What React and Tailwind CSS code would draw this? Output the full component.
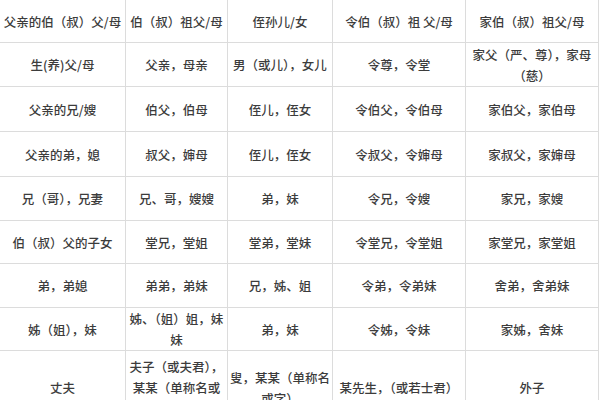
import React from 'react';

const rows = [
  ['父亲的伯（叔）父/母', '伯（叔）祖父/母', '侄孙儿/女', '令伯（叔）祖 父/母', '家伯（叔）祖父/母'],
  ['生(养)父/母', '父亲，母亲', '男（或儿），女儿', '令尊，令堂', '家父（严、尊），家母（慈）'],
  ['父亲的兄/嫂', '伯父，伯母', '侄儿，侄女', '令伯父，令伯母', '家伯父，家伯母'],
  ['父亲的弟，媳', '叔父，婶母', '侄儿，侄女', '令叔父，令婶母', '家叔父，家婶母'],
  ['兄（哥），兄妻', '兄、哥，嫂嫂', '弟，妹', '令兄，令嫂', '家兄，家嫂'],
  ['伯（叔）父的子女', '堂兄，堂姐', '堂弟，堂妹', '令堂兄，令堂姐', '家堂兄，家堂姐'],
  ['弟，弟媳', '弟弟，弟妹', '兄，姊、姐', '令弟，令弟妹', '舍弟，舍弟妹'],
  ['姊（姐），妹', '姊、（姐）姐，妹妹', '弟，妹', '令姊，令妹', '家姊，舍妹'],
  ['丈夫', '夫子（或夫君），某某（单称名或字）', '叟，某某（单称名或字）', '某先生，（或若士君）', '外子'],
];

const heights = ['h-[43px]', 'h-[44px]', 'h-[45px]', 'h-[45px]', 'h-[44px]', 'h-[43px]', 'h-[44px]', 'h-[42px]', 'h-[74px]'];

export default function App() {
  return (
    <div className="w-[600px] h-[400px] overflow-hidden bg-white">
      <table
        className="table-fixed border-collapse text-center text-[12.5px] leading-[21px] font-medium text-[#3c3c3c] -ml-px -mt-px"
        style={{ fontFamily: '"Noto Sans CJK SC", "Noto Sans", sans-serif' }}
      >
        <colgroup>
          <col className="w-[126px]" />
          <col className="w-[102px]" />
          <col className="w-[105px]" />
          <col className="w-[133px]" />
          <col className="w-[133px]" />
        </colgroup>
        <tbody>
          {rows.map((r, i) => (
            <tr key={i} className={heights[i]}>
              {r.map((c, j) => (
                <td key={j} className="border border-[#dcdcdc] p-0 align-middle">
                  {c}
                </td>
              ))}
            </tr>
          ))}
        </tbody>
      </table>
    </div>
  );
}
